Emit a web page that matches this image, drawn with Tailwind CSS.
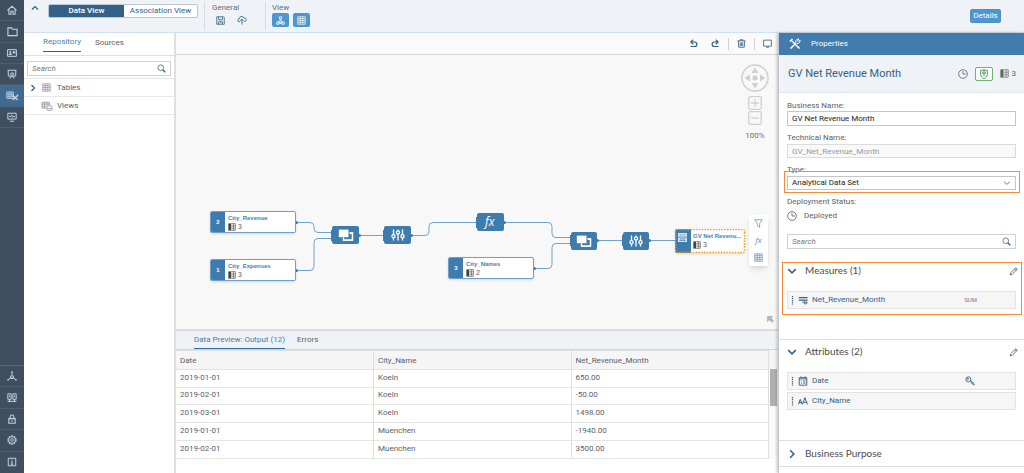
<!DOCTYPE html>
<html lang="en">
<head>
<meta charset="utf-8">
<title>GV Net Revenue Month</title>
<script src="https://cdn.jsdelivr.net/npm/@tailwindcss/browser@4"></script>
</head>
<body class="flex h-screen overflow-hidden bg-white font-['Roboto',sans-serif] text-[8px] leading-[10px] text-[#5c6065]">

<svg class="hidden" aria-hidden="true">
  <symbol id="search" viewBox="0 0 12 12"><g fill="none" stroke="currentColor"><circle cx="5" cy="5" r="3.8" stroke-width="1"/><path d="M7.6 7.6 11 11" stroke-width="1.8"/></g></symbol>
  <symbol id="grid" viewBox="0 0 12 12"><path d="M1 1h10v10H1zM1 3.5h10M1 6h10M1 8.5h10M4.3 1v10M7.7 1v10" fill="none" stroke="currentColor" stroke-width=".9"/></symbol>
  <symbol id="cols" viewBox="0 0 12 12"><path d="M1 1h3.6v10H1z" fill="currentColor"/><path d="M1 1h10v10H1zM4.6 4.3H11M4.6 7.7H11M8 1v10" fill="none" stroke="currentColor" stroke-width=".9"/></symbol>
  <symbol id="down" viewBox="0 0 12 12"><path d="m1.500 3.800 4.500 4.400 4.500-4.400" fill="none" stroke="currentColor" stroke-width="1.900"/></symbol>
  <symbol id="thin-down" viewBox="0 0 12 12"><path d="m1.500 4 4.500 4 4.500-4" fill="none" stroke="currentColor" stroke-width="1.200"/></symbol>
  <symbol id="right" viewBox="0 0 12 12"><path d="m3.800 1.500 4.400 4.500-4.400 4.500" fill="none" stroke="currentColor" stroke-width="1.900"/></symbol>
  <symbol id="clock" viewBox="0 0 12 12"><g fill="none" stroke="currentColor" stroke-width="1"><circle cx="6" cy="6" r="5.200"/><path d="M6 2.500V6h3.500"/></g></symbol>
  <symbol id="pencil" viewBox="0 0 12 12"><path d="m1.500 10.500.8-2.800L9 1l2 2-6.700 6.700zM7.600 2.400l2 2" fill="none" stroke="currentColor" stroke-width="1.100"/></symbol>
  <symbol id="grip" viewBox="0 0 3 9"><path d="M1.500 0v9" stroke="currentColor" stroke-width="1.200" stroke-dasharray="1.200 .9"/></symbol>
  <symbol id="join" viewBox="0 0 16 12"><path d="M5.500 4h9v7.200h-9z" fill="none" stroke="#fff" stroke-width="1.300"/><path d="M.3 0h11.500v9.300H.3z" fill="#3f7cae"/><path d="M.8.600h9.700v7.600H.8z" fill="#fff"/><path d="M5.500 8.200v3h9V4h-3" fill="none" stroke="#fff" stroke-width="1.300"/></symbol>
  <symbol id="sliders" viewBox="0 0 14 12"><g fill="none" stroke="#fff" stroke-width="1.300"><path d="M2.500.5v5M2.500 9v2.500M7 .5v1.200M7 5.200v6.300M11.500.5v5M11.500 9v2.500"/><circle cx="2.500" cy="7.200" r="1.600"/><circle cx="7" cy="3.400" r="1.600"/><circle cx="11.500" cy="7.200" r="1.600"/></g></symbol>
</svg>

<nav aria-label="Main" class="flex w-6 shrink-0 flex-col justify-between bg-[#3f4f5f] text-[#bdd3e8]">
  <div class="grid h-32 grid-rows-6">
    <a href="#" aria-label="Home" class="grid place-items-center border-b border-[#4d5d6d]"><svg class="size-[10px]" viewBox="0 0 12 12" fill="none" stroke="currentColor" stroke-width="1.300"><path d="M.5 6.500 6 1.500l5.500 5M2.300 5.500V11h2.500V7.500h2.400V11h2.500V5.500"/></svg></a>
    <a href="#" aria-label="Folders" class="grid place-items-center border-b border-[#4d5d6d]"><svg class="size-[11px]" viewBox="0 0 12 12" fill="none" stroke="currentColor" stroke-width="1.200"><path d="M1 10.500V2h4l1 1.500h5v7z"/></svg></a>
    <a href="#" aria-label="Business card" class="grid place-items-center border-b border-[#4d5d6d]"><svg class="size-[10px]" viewBox="0 0 12 12"><path d="M.7 2h10.600v8H.7z" fill="none" stroke="currentColor" stroke-width="1.200"/><circle cx="4" cy="4.800" r="1.200" fill="currentColor"/><path d="M2 8.500c0-3 4-3 4 0zM7 4h3v2.500H7z" fill="currentColor"/></svg></a>
    <a href="#" aria-label="Story" class="grid place-items-center border-b border-[#4d5d6d]"><svg class="size-[10px]" viewBox="0 0 12 12" fill="none" stroke="currentColor" stroke-width="1.200"><path d="M.5 1.500h11M1.500 1.500V8.500h9v-7M3.500 11.500l1.500-3M8.500 11.500l-1.500-3M4 7V5M6 10V3.500M8 7V4.500"/></svg></a>
    <a href="#" aria-label="Data builder" aria-current="page" class="grid place-items-center bg-[#42698f]"><svg class="h-[10px] w-[13px]" viewBox="0 0 16 12" fill="none" stroke="currentColor" stroke-width="1.100"><path d="M1 1h8v8H1zM1 3.700h8M1 6.300h8M3.700 1v8M6.300 1v8"/><path d="m8 5 6.500 6M15 4.500 8.500 11" stroke-width="1.800"/></svg></a>
    <a href="#" aria-label="Monitor" class="grid place-items-center border-b border-[#4d5d6d]"><svg class="size-[10px]" viewBox="0 0 12 12" fill="none" stroke="currentColor" stroke-width="1.200"><path d="M1 1.500h10v7H1zM3.500 11h5M2.500 5.500h2l1-2 1.200 3 .8-1H9.500"/></svg></a>
  </div>
  <div class="grid h-[108px] grid-rows-5 border-t border-[#2f7499]">
    <a href="#" aria-label="Spaces" class="grid place-items-center border-b border-[#4d5d6d]"><svg class="size-[10px]" viewBox="0 0 12 12" fill="none" stroke="currentColor" stroke-width="1.100"><circle cx="6" cy="1.500" r=".8"/><path d="M6 2.500v2M4.200 9V6.300L6 4.500l1.800 1.800V9zM6 6v3M4.200 8 1.500 10.500M7.800 8l2.700 2.500"/><circle cx="1.300" cy="10.500" r=".7"/><circle cx="10.700" cy="10.500" r=".7"/></svg></a>
    <a href="#" aria-label="Connections" class="grid place-items-center border-b border-[#4d5d6d]"><svg class="size-[10px]" viewBox="0 0 12 12" fill="none" stroke="currentColor" stroke-width="1.200"><path d="M1 1h4v6.500H1zM7 1h4v6.500H7zM3 3v2M9 3v2M3 7.500V11M9 7.500V11M.5 10h11"/></svg></a>
    <a href="#" aria-label="Security" class="grid place-items-center border-b border-[#4d5d6d]"><svg class="size-[10px]" viewBox="0 0 12 12" fill="none" stroke="currentColor" stroke-width="1.300"><path d="M2.200 5.500h7.600V11H2.200zM3.800 5.500V3.500c0-3 4.400-3 4.400 0v2M6 7.200v2"/></svg></a>
    <a href="#" aria-label="Settings" class="grid place-items-center border-b border-[#4d5d6d]"><svg class="size-[10px]" viewBox="0 0 12 12" fill="none" stroke="currentColor"><circle cx="6" cy="6" r="4.800" stroke-width="1.600" stroke-dasharray="2.200 .8"/><circle cx="6" cy="6" r="3.900" stroke-width=".8"/><circle cx="6" cy="6" r="1.600"/></svg></a>
    <a href="#" aria-label="About" class="grid place-items-center"><svg class="size-[10px]" viewBox="0 0 12 12" fill="none" stroke="currentColor" stroke-width="1.200"><path d="M1.500 1.500h9v9h-9zM6 3v1.200M5 5.500h1v3M4.500 8.700h3"/></svg></a>
  </div>
</nav>

<div class="flex min-w-0 flex-1 flex-col">
  <header class="flex h-[33px] shrink-0 items-start border-b border-[#cfe1f0] bg-[#eff3f8]">
    <button aria-label="Collapse" class="ml-[7px] mt-1 text-[#346187]"><svg class="size-2 rotate-180"><use href="#down"/></svg></button>
    <div class="ml-[9px] mt-1 flex h-[14px] w-[150px] overflow-hidden rounded-xs border border-[#b9c6d3] bg-white">
      <button class="w-[75px] bg-[#346187] font-medium text-white">Data View</button>
      <button class="flex-1 text-[#346187]">Association View</button>
    </div>
    <div class="ml-[6px] mt-[2px] h-7 border-l border-[#d5dbe1] pl-[7px]">
      <p class="pt-[1px] text-[#6a6d70]">General</p>
      <div class="flex gap-3 pl-1 pt-[2px] text-[#346187]">
        <button aria-label="Save"><svg class="size-[9px]" viewBox="0 0 12 12" fill="none" stroke="currentColor" stroke-width="1.100"><path d="M1 1h9l1 1v9H1zM3.500 1v4h5V1M3.500 11V7.500h5V11M5.500 9h1"/></svg></button>
        <button aria-label="Deploy"><svg class="size-[10px]" viewBox="0 0 12 12" fill="none" stroke="currentColor" stroke-width="1.100"><path d="M3.500 8H2.500C.3 8 .3 5 2.500 5 2.500 1.500 7 .5 8.300 3.500c3.500-.3 3.700 4.500.5 4.500M6 11.500V5M4 7l2-2 2 2"/></svg></button>
      </div>
    </div>
    <div class="ml-[18px] mt-[2px] h-7 border-l border-[#d5dbe1] pl-[6px]">
      <p class="pt-[1px] text-[#6a6d70]">View</p>
      <div class="flex gap-1 text-white">
        <button aria-label="Diagram" class="grid h-[14px] w-[17px] place-items-center rounded-xs bg-[#4f95ce]"><svg class="size-[9px]" viewBox="0 0 12 12" fill="none" stroke="currentColor" stroke-width="1.100"><path d="M4.500 1h3v3h-3zM6 4v2M2.500 8 6 5.500 9.500 8M1 8h3v3H1zM8 8h3v3H8zM5 8h2v2H5z"/></svg></button>
        <button aria-label="Table" class="grid h-[14px] w-[17px] place-items-center rounded-xs bg-[#4f95ce]"><svg class="size-[9px]"><use href="#grid"/></svg></button>
      </div>
    </div>
    <button class="ml-auto mr-[23px] mt-[9px] h-[14px] w-[31px] rounded-xs border border-[#4a90c9] bg-[#4f95ce] text-center text-white">Details</button>
  </header>

  <div class="flex min-h-0 flex-1">
    <aside class="w-[152px] shrink-0 border-r-2 border-[#dddfe1]">
      <div class="flex h-[23px] gap-[14px] border-b border-[#d3e2ef] pl-[19px]">
        <button class="mb-[3px] border-b border-[#346187] text-[#4682b4]">Repository</button>
        <button class="mb-[3px]">Sources</button>
      </div>
      <label class="mx-[3px] mt-[5px] flex h-[15px] items-center border border-[#cfd2d5] pr-1 text-[#346187]">
        <input type="search" aria-label="Search repository" placeholder="Search" class="min-w-0 flex-1 px-1 italic outline-none placeholder:text-[#74777a]">
        <svg class="size-[9px]"><use href="#search"/></svg>
      </label>
      <ul class="mt-[2px] border-t border-[#e5e5e5]">
        <li class="flex h-[18px] items-center border-b border-[#e8e8e8] pl-[5px]"><svg class="size-2 text-[#346187]"><use href="#right"/></svg><svg class="ml-[5px] mr-[6px] size-[9px] text-[#8a8d90]"><use href="#grid"/></svg>Tables</li>
        <li class="flex h-[18px] items-center border-b border-[#e8e8e8] pl-[17px]"><svg class="mr-[4px] h-[10px] w-3 text-[#8a8d90]" viewBox="0 0 14 12" fill="none" stroke="currentColor" stroke-width=".9"><path d="M6 8.500H1v-7h9V5M1 3.700h9M1 6.200h5.500M4 1.500v7M7 1.500V5"/><path d="M7 6.500v4c0 1.300 6 1.300 6 0v-4c0-1.300-6-1.300-6 0zM7 8.500c0 1 6 1 6 0"/></svg>Views</li>
      </ul>
    </aside>

    <main class="flex min-w-0 flex-1 flex-col">
      <div class="flex h-[22px] shrink-0 items-center justify-end border-b border-[#d9d9d9] bg-[#fafafa] pr-[6px] text-[#346187]">
        <button aria-label="Undo"><svg class="size-[9px]" viewBox="0 0 12 12" fill="none" stroke="currentColor" stroke-width="1.600"><path d="M5.500 1 2.500 4l3 3M2.500 4h5c4 0 4 6 0 6H2"/></svg></button>
        <button aria-label="Redo" class="ml-[13px]"><svg class="size-[9px]" viewBox="0 0 12 12" fill="none" stroke="currentColor" stroke-width="1.600"><path d="m6.500 1 3 3-3 3M9.500 4h-5c-4 0-4 6 0 6H10"/></svg></button>
        <span class="ml-2 h-3 border-l border-[#d0d3d6]"></span>
        <button aria-label="Delete" class="ml-2"><svg class="size-[9px]" viewBox="0 0 12 12" fill="none" stroke="currentColor" stroke-width="1.100"><path d="M.5 2.500h11M4 2.500V1h4v1.500M1.700 2.500l.6 8.500h7.400l.6-8.500M4.300 4.500v5M6 4.500v5M7.700 4.500v5"/></svg></button>
        <span class="ml-2 h-3 border-l border-[#d0d3d6]"></span>
        <button aria-label="Full screen" class="ml-2"><svg class="size-[9px]" viewBox="0 0 12 12" fill="none" stroke="currentColor" stroke-width="1.100"><path d="M.8 1.500h10.400V9.500H.8zM4 11h4"/></svg></button>
      </div>

      <section aria-label="Data flow" class="relative min-h-0 flex-1 overflow-hidden bg-[#f8f8f8]">
        <svg class="absolute left-0 top-0 h-[274px] w-[602px]" viewBox="176 55 602 274">
          <g fill="none" stroke="#6fa3cc" stroke-width="1">
            <path d="M296 222.500h14q4 0 4 4v2q0 4 4 4h15M296 270.500h14q4 0 4-4v-24q0-4 4-4h15M359 235.500h26M411 235.500h14q4 0 4-4v-5q0-4 4-4h44M504 222.500h44q4 0 4 4v7q0 4 4 4h15M534 268.500h14q4 0 4-4v-17q0-4 4-4h15M597 240.500h26M649 240.500h27"/>
          </g>
          <g fill="#3f7cae">
            <circle cx="296.500" cy="222.500" r="1.500"/><circle cx="296.500" cy="270.500" r="1.500"/><circle cx="534.500" cy="268.500" r="1.500"/>
            <circle cx="359.500" cy="235.500" r="1.500"/><circle cx="411.500" cy="235.500" r="1.500"/><circle cx="504.500" cy="222.500" r="1.500"/><circle cx="597.500" cy="240.500" r="1.500"/><circle cx="649.500" cy="240.500" r="1.500"/>
            <path d="M331 230h2v11h-2zM383 230h2v11h-2zM476 217h2v11h-2zM570 235h2v11h-2zM622 235h2v11h-2z"/>
            <rect x="332" y="226" width="27" height="18" rx="2"/><rect x="384" y="226" width="27" height="18" rx="2"/><rect x="477" y="213" width="27" height="18" rx="2"/><rect x="571" y="232" width="26" height="18" rx="2"/><rect x="623" y="232" width="26" height="18" rx="2"/>
          </g>
          <use href="#join" x="338" y="229" width="16" height="12"/>
          <use href="#sliders" x="391" y="229" width="14" height="12"/>
          <use href="#join" x="576" y="235" width="16" height="12"/>
          <use href="#sliders" x="629" y="235" width="14" height="12"/>
          <text x="485" y="226" fill="#fff" font-size="12" font-style="italic" font-family="Open Sans">fx</text>
        </svg>

        <div class="absolute left-[34px] top-[156px] flex h-[22px] w-[86px] overflow-hidden rounded-xs border border-[#6fa0c8] bg-white font-['Liberation_Sans',sans-serif] text-[7px] leading-[8px] shadow">
          <span class="grid w-[14px] place-items-center bg-[#3f7cae] text-[6px] font-bold text-white">2</span>
          <div class="pl-[3px] pt-[2px]"><p class="text-[6px] font-bold text-[#4682b4]">City_Revenue</p><p class="mt-[1px] flex items-center gap-[2px]"><svg class="size-2 text-[#444]"><use href="#cols"/></svg>3</p></div>
        </div>
        <div class="absolute left-[34px] top-[204px] flex h-[22px] w-[86px] overflow-hidden rounded-xs border border-[#6fa0c8] bg-white font-['Liberation_Sans',sans-serif] text-[7px] leading-[8px] shadow">
          <span class="grid w-[14px] place-items-center bg-[#3f7cae] text-[6px] font-bold text-white">1</span>
          <div class="pl-[3px] pt-[2px]"><p class="text-[6px] font-bold text-[#4682b4]">City_Expenses</p><p class="mt-[1px] flex items-center gap-[2px]"><svg class="size-2 text-[#444]"><use href="#cols"/></svg>3</p></div>
        </div>
        <div class="absolute left-[272px] top-[202px] flex h-[22px] w-[86px] overflow-hidden rounded-xs border border-[#6fa0c8] bg-white font-['Liberation_Sans',sans-serif] text-[7px] leading-[8px] shadow">
          <span class="grid w-[14px] place-items-center bg-[#3f7cae] text-[6px] font-bold text-white">3</span>
          <div class="pl-[3px] pt-[2px]"><p class="text-[6px] font-bold text-[#4682b4]">City_Names</p><p class="mt-[1px] flex items-center gap-[2px]"><svg class="size-2 text-[#444]"><use href="#cols"/></svg>2</p></div>
        </div>
        <div class="absolute left-[499px] top-[174px] flex h-6 w-[70px] overflow-hidden rounded-xs bg-white font-['Liberation_Sans',sans-serif] text-[7px] leading-[8px] shadow">
          <span class="w-4 shrink-0 bg-[#3f7cae] pl-[3px] pt-1"><svg class="size-[9px]" viewBox="0 0 12 12"><path d="M0 0h12v12H0z" fill="#d5e4f1"/><path d="M0 5.500h12M2 8h8M2 10h8M2 2.500h2M5 2.500h2M8 2.500h2" stroke="#3f7cae"/></svg></span>
          <div class="pl-[2px] pt-[3px]"><p class="whitespace-nowrap text-[6px] font-bold text-[#4682b4]">GV Net Revenu...</p><p class="mt-[1px] flex items-center gap-[2px]"><svg class="size-2 text-[#444]"><use href="#cols"/></svg>3</p></div>
          <svg class="absolute inset-0 size-full"><rect x=".5" y=".5" width="69" height="23" rx="1" fill="none" stroke="#f29b1d" stroke-width="1.500" stroke-dasharray="1.600 1.200"/></svg>
        </div>

        <div class="absolute right-[10px] top-[160px] flex h-[51px] w-[19px] flex-col items-center justify-around rounded-xs bg-white text-[#5f8fb8] shadow-md">
          <button aria-label="Filter"><svg class="size-[9px]" viewBox="0 0 12 12" fill="none" stroke="currentColor"><path d="M1 1h10L7.500 6v5L4.500 9V6z"/></svg></button>
          <button aria-label="Formula" class="font-['Open_Sans',sans-serif] italic">fx</button>
          <button aria-label="Preview data"><svg class="size-[9px]"><use href="#grid"/></svg></button>
        </div>

        <div class="absolute right-[9px] top-[9px] flex w-7 flex-col items-center text-[#6a6d70]">
          <svg class="size-7" viewBox="0 0 28 28" fill="#cfcfcf"><circle cx="14" cy="14" r="13" fill="none" stroke="#cfcfcf" stroke-width="1.500"/><circle cx="14" cy="14" r="2.500"/><path d="M14 3.500 17.500 9h-7zM14 24.500 17.500 19h-7zM3.500 14 9 10.500v7zM24.500 14 19 10.500v7z"/></svg>
          <button aria-label="Zoom in" class="mt-1"><svg class="size-[14px]" viewBox="0 0 14 14" fill="none" stroke="#cfcfcf" stroke-width="1.300"><rect x=".7" y=".7" width="12.600" height="12.600" rx="1.500"/><path d="M3 7h8M7 3v8"/></svg></button>
          <button aria-label="Zoom out" class="mt-[1px]"><svg class="size-[14px]" viewBox="0 0 14 14" fill="none" stroke="#cfcfcf" stroke-width="1.300"><rect x=".7" y=".7" width="12.600" height="12.600" rx="1.500"/><path d="M3 7h8"/></svg></button>
          <span class="mt-[6px]">100%</span>
        </div>
        <svg class="absolute bottom-[6px] right-1 size-[7px]" viewBox="0 0 8 8" stroke="#b5b5b5" fill="#b5b5b5"><path d="M.5 6.500v-6h6L4.700 2.300 7.500 5.500l-1.800 1.800-3-3z"/></svg>
      </section>

      <section aria-label="Data preview" class="h-36 shrink-0 border-t-2 border-[#d9dbdd]">
        <div class="flex h-[19px] gap-3 border-b border-[#bcd8ee] bg-[#eff3f8] pl-[18px]">
          <button class="border-b border-[#2f6da3] text-[#427cac]">Data Preview: Output (12)</button>
          <button>Errors</button>
        </div>
        <div class="flex">
          <table class="flex-1 table-fixed border-collapse text-left">
            <thead>
              <tr class="h-[19px] border-y border-[#e2e2e2] bg-[#f5f5f5]"><th class="w-1/3 border-r border-[#dedede] px-1 pt-[2px] font-normal">Date</th><th class="w-1/3 border-r border-[#dedede] px-1 pt-[2px] font-normal">City_Name</th><th class="w-1/3 border-r border-[#dedede] px-1 pt-[2px] font-normal">Net_Revenue_Month</th></tr>
            </thead>
            <tbody>
              <tr class="h-[18px] border-b border-[#e5e5e5]"><td class="border-r border-[#dedede] px-1 pb-[2px]">2019-01-01</td><td class="border-r border-[#dedede] px-1 pb-[2px]">Koeln</td><td class="border-r border-[#dedede] px-1 pb-[2px]">650.00</td></tr>
              <tr class="h-[17px] border-b border-[#e5e5e5]"><td class="border-r border-[#dedede] px-1 pb-[2px]">2019-02-01</td><td class="border-r border-[#dedede] px-1 pb-[2px]">Koeln</td><td class="border-r border-[#dedede] px-1 pb-[2px]">-50.00</td></tr>
              <tr class="h-[18px] border-b border-[#e5e5e5]"><td class="border-r border-[#dedede] px-1 pb-[2px]">2019-03-01</td><td class="border-r border-[#dedede] px-1 pb-[2px]">Koeln</td><td class="border-r border-[#dedede] px-1 pb-[2px]">1498.00</td></tr>
              <tr class="h-[18px] border-b border-[#e5e5e5]"><td class="border-r border-[#dedede] px-1 pb-[2px]">2019-01-01</td><td class="border-r border-[#dedede] px-1 pb-[2px]">Muenchen</td><td class="border-r border-[#dedede] px-1 pb-[2px]">-1940.00</td></tr>
              <tr class="h-[18px] border-b border-[#e5e5e5]"><td class="border-r border-[#dedede] px-1 pb-[2px]">2019-02-01</td><td class="border-r border-[#dedede] px-1 pb-[2px]">Muenchen</td><td class="border-r border-[#dedede] px-1 pb-[2px]">3500.00</td></tr>
            </tbody>
          </table>
          <div class="w-[9px] bg-[#fafafa]"><div class="h-[19px] bg-[#f5f5f5]"></div><div class="mx-[1px] h-[37px] bg-[#b0b0b0]"></div></div>
        </div>
      </section>
    </main>

    <aside aria-label="Properties" class="relative w-[246px] shrink-0 border-l border-[#c4c8cc] bg-white shadow-[-1px_0_3px_#00000040]">
      <div class="flex h-[22px] items-center gap-[10px] bg-[#427cac] pl-[10px] text-white">
        <svg class="size-3" viewBox="0 0 12 12" fill="none" stroke="currentColor"><path d="m3 3 7.500 7.500M1 3.500 3.500 1M1.500 10.500 7 5" stroke-width="1.700"/><path d="M7 5C6 2 8 .8 10 1L8.500 2.700l.8.800L11 2c.5 2.200-1 3.800-3 3.500" stroke-width="1"/></svg>
        <h2>Properties</h2>
      </div>
      <div class="flex h-[38px] items-center border-b border-[#dbe6ef] bg-[#eff3f8] pl-[9px] pr-2">
        <h1 class="flex-1 text-[11px] text-[#346187]">GV Net Revenue Month</h1>
        <svg class="mr-[7px] size-[10px] text-[#63676b]"><use href="#clock"/></svg>
        <span class="mr-[7px] grid h-[14px] w-[18px] place-items-center rounded-xs border border-[#6fb06f] bg-white text-[#3f9a3f]"><svg class="size-[10px]" viewBox="0 0 12 12" fill="none" stroke="currentColor" stroke-width="1.100"><path d="M2 1.500h8V7c0 2-2 3.500-4 4.500C4 10.500 2 9 2 7zM6 0v1.500M4.500 3.500h3v2h-3zM4.500 7.500h3"/></svg></span>
        <svg class="mr-[3px] size-[9px] text-[#63676b]"><use href="#cols"/></svg>3
      </div>

      <div class="px-2 pt-2">
        <label for="bn" class="block">Business Name:</label>
        <input id="bn" value="GV Net Revenue Month" class="block h-[15px] w-full border border-[#c4c7ca] px-1 text-[#222]">
        <label for="tn" class="mt-[7px] block">Technical Name:</label>
        <input id="tn" value="GV_Net_Revenue_Month" disabled class="mt-[1px] block h-[14px] w-full border border-[#d9dbdd] bg-[#f9f9f9] px-1 text-[#97999b]">
        <label for="ty" class="mt-[7px] block">Type:</label>
        <div class="relative mt-[1px]">
          <select id="ty" class="block h-[14px] w-full appearance-none border border-[#c4c7ca] bg-white px-1 text-[#222]"><option>Analytical Data Set</option></select>
          <svg class="pointer-events-none absolute right-[5px] top-[3px] size-2 text-[#346187]"><use href="#thin-down"/></svg>
          <span class="pointer-events-none absolute -left-[3px] -right-1 -bottom-[3px] -top-[5px] border border-[#f58a3c]"></span>
        </div>
        <p class="mt-[7px]">Deployment Status:</p>
        <p class="mt-1 flex items-center gap-[7px]"><svg class="size-[10px]"><use href="#clock"/></svg>Deployed</p>
        <label class="mt-[13px] flex h-[15px] items-center border border-[#cfd2d5] pr-1 text-[#346187]">
          <input type="search" aria-label="Search properties" placeholder="Search" class="min-w-0 flex-1 px-1 italic outline-none placeholder:text-[#74777a]">
          <svg class="size-[9px]"><use href="#search"/></svg>
        </label>
      </div>

      <section class="relative mt-[14px] h-[77px] border-b border-[#dcdcdc] px-2">
        <span class="pointer-events-none absolute left-[3px] right-[2px] -top-[1px] h-[53px] border border-[#f58a3c]"></span>
        <div class="flex h-4 items-center text-[#346187]">
          <svg class="size-[10px]"><use href="#down"/></svg><h3 class="ml-2 flex-1 pb-[2px] font-['Lato',sans-serif] text-[10px] text-[#4a4d50]">Measures (1)</h3>
          <button aria-label="Edit measures" class="-mr-[2px]"><svg class="size-[9px]"><use href="#pencil"/></svg></button>
        </div>
        <div class="mt-3 flex h-[18px] items-center border border-[#e3e3e3] bg-[#f6f6f6] pl-[3px] text-[#346187]">
          <svg class="h-[9px] w-[3px]"><use href="#grip"/></svg>
          <svg class="mx-1 size-[10px]" viewBox="0 0 12 12" fill="none" stroke="currentColor"><path d="M1 3h10.500M1 6h10.500" stroke-width="1.500"/><path d="M5 8.500h6M7.500 8v2.500h3V8"/></svg>
          <span class="flex-1">Net_Revenue_Month</span><span class="mr-[38px] text-[6px] text-[#74777a]">SUM</span>
        </div>
      </section>

      <section class="h-[101px] border-b border-[#dcdcdc] px-2 pt-1">
        <div class="flex h-4 items-center text-[#346187]">
          <svg class="size-[10px]"><use href="#down"/></svg><h3 class="ml-2 flex-1 pb-[2px] font-['Lato',sans-serif] text-[10px] text-[#4a4d50]">Attributes (2)</h3>
          <button aria-label="Edit attributes" class="-mr-[2px]"><svg class="size-[9px]"><use href="#pencil"/></svg></button>
        </div>
        <div class="mt-3 flex h-[18px] items-center border border-[#e3e3e3] bg-[#f6f6f6] pl-[3px] text-[#346187]">
          <svg class="h-[9px] w-[3px]"><use href="#grip"/></svg>
          <svg class="mx-1 size-[10px]" viewBox="0 0 12 12" fill="none" stroke="currentColor" stroke-width="1.100"><path d="M1.500 2h9v9h-9zM1.500 3.500h9M3.500.5v2M8.500.5v2M3.500 6h1M6 6h3M3.500 8.500h1M6 8.500h3"/></svg>
          <span class="flex-1">Date</span>
          <svg class="mr-10 size-[10px]" viewBox="0 0 12 12" fill="none" stroke="currentColor" stroke-width="1.100"><circle cx="4" cy="4" r="3"/><circle cx="3.500" cy="3.500" r=".7"/><path d="m6 6.500 4.500 4.500.8-1.500L6.800 5.200M8.500 9l1-1"/></svg>
        </div>
        <div class="mt-[2px] flex h-[18px] items-center border border-[#e3e3e3] bg-[#f6f6f6] pl-[3px] text-[#346187]">
          <svg class="h-[9px] w-[3px]"><use href="#grip"/></svg>
          <svg class="mx-1 size-[10px]" viewBox="0 0 12 12" fill="none" stroke="currentColor" stroke-width="1.200"><path d="M.5 10 2.700 4 5 10M1.300 8h3M5.300 10 8.300 2l3 8M6.500 7.500h3.700"/></svg>
          <span class="flex-1">City_Name</span>
        </div>
      </section>
      <section class="flex h-[26px] items-center border-b border-[#dcdcdc] px-2 text-[#346187]">
        <svg class="size-[10px]"><use href="#right"/></svg><h3 class="ml-2 pb-[2px] font-['Lato',sans-serif] text-[10px] text-[#4a4d50]">Business Purpose</h3>
      </section>
    </aside>
  </div>
</div>
</body>
</html>
